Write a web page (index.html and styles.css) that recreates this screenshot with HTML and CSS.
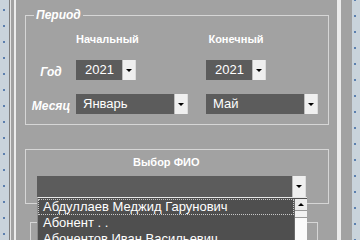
FILE: index.html
```html
<!DOCTYPE html>
<html lang="ru">
<head>
    <meta charset="UTF-8">
    <meta name="viewport" content="width=device-width, initial-scale=1.0">
    <title>Период и выбор ФИО</title>
    <link rel="stylesheet" href="styles.css">
</head>
<body>
    <div class="screen">
        <div class="strip strip-left"></div>
        <div class="window">
            <div class="frame">
                <div class="panel">
                    <fieldset class="group period">
                        <legend>Период</legend>
                        <div class="period-grid">
                            <span></span>
                            <div class="col-head">Начальный</div>
                            <div class="col-head">Конечный</div>

                            <div class="row-label">Год</div>
                            <div class="combo combo-year">
                                <span class="combo-text">2021</span>
                                <span class="combo-btn"></span>
                            </div>
                            <div class="combo combo-year">
                                <span class="combo-text">2021</span>
                                <span class="combo-btn"></span>
                            </div>

                            <div class="row-label">Месяц</div>
                            <div class="combo combo-month">
                                <span class="combo-text">Январь</span>
                                <span class="combo-btn"></span>
                            </div>
                            <div class="combo combo-month">
                                <span class="combo-text">Май</span>
                                <span class="combo-btn"></span>
                            </div>
                        </div>
                    </fieldset>

                    <fieldset class="group fio">
                        <div class="group-title">Выбор ФИО</div>
                        <div class="combo-wrap">
                            <div class="combo combo-wide">
                                <span class="combo-text"></span>
                                <span class="combo-btn"></span>
                            </div>
                            <div class="dropdown">
                                <ul class="dropdown-items">
                                    <li class="focused">Абдуллаев Меджид Гарунович</li>
                                    <li>Абонент . .</li>
                                    <li>Абонентов Иван Васильевич</li>
                                </ul>
                                <div class="scrollbar">
                                    <span class="scroll-up"></span>
                                    <span class="scroll-thumb"></span>
                                </div>
                            </div>
                        </div>
                    </fieldset>

                    <div class="group group-bottom"></div>
                </div>
            </div>
        </div>
        <div class="strip strip-right"></div>
    </div>
</body>
</html>
```

FILE: styles.css
```css
body {
    margin: 0;
    width: 360px;
    height: 240px;
    overflow: hidden;
    background: #a2a2a2;
    font-family: "Liberation Sans", Arial, sans-serif;
    color: #fff;
}

.screen {
    display: flex;
    height: 240px;
}

/* dotted blue edges of the neighbouring windows */
.strip {
    flex-shrink: 0;
    background-color: #c9d3db;
    background-image: linear-gradient(to bottom, transparent 0, transparent 5px, #5b7fae 5px, #5b7fae 7px, transparent 7px);
    background-size: 2px 16px;
    background-repeat: repeat-y;
}

.strip-left {
    width: 9px;
    background-position: 3px 4px;
}

.strip-right {
    width: 8px;
    background-position: 2px 10px;
}

.window {
    flex: 1;
    display: flex;
    border-left: 1px solid #7e7e7e;
    padding-right: 11px;
}

.frame {
    flex: 1;
    display: flex;
    border-left: 1px solid #e4e4e4;
    border-right: 4px solid #ececec;
    padding-left: 3px;
}

.panel {
    flex: 1;
    min-width: 0;
    border-left: 2px solid #ececec;
    padding: 8px 8px 0 9px;
}

.group {
    margin: 0;
    padding: 0;
    min-width: 0;
    border: 1px solid #d6d6d6;
}

.period legend {
    margin-left: 8px;
    padding: 0 2px;
    font-size: 12px;
    font-weight: bold;
    font-style: italic;
    line-height: 14px;
}

.period-grid {
    display: grid;
    grid-template-columns: 50px 130px 112px;
    row-gap: 14px;
    margin-top: 10px;
    padding-bottom: 10px;
}

.col-head {
    width: 60px;
    text-align: center;
    font-size: 11px;
    font-weight: bold;
    line-height: 14px;
}

.row-label {
    text-align: center;
    font-size: 12px;
    font-weight: bold;
    font-style: italic;
    line-height: 14px;
    padding-top: 5px;
}

.combo {
    display: flex;
    height: 20px;
    background: #5c5c5c;
    border-right: 1px solid #dcdcdc;
    box-sizing: border-box;
}

.combo-text {
    flex: 1;
    padding-left: 7px;
    font-size: 13px;
    line-height: 20px;
}

.combo-year {
    width: 60px;
}

.combo-year .combo-text {
    padding-left: 9px;
}

.combo-month {
    width: 112px;
}

.combo-btn {
    width: 12px;
    background: #efefef;
    border-left: 1px solid #bdbdbd;
    display: flex;
    align-items: center;
    justify-content: center;
}

.combo-btn::after {
    content: "";
    border-left: 3px solid transparent;
    border-right: 3px solid transparent;
    border-top: 3px solid #000;
}

.fio {
    margin-top: 24px;
    padding-bottom: 6px;
}

.group-title {
    padding: 5px 0 0 107px;
    font-size: 11px;
    font-weight: bold;
    line-height: 14px;
}

.combo-wrap {
    position: relative;
    margin: 7px 0 0 11px;
    width: 269px;
}

.combo-wide {
    width: 269px;
    height: 21px;
}

/* open list of the FIO combobox, drawn over the form */
.dropdown {
    position: absolute;
    top: 100%;
    left: 0;
    width: 270px;
    height: 60px;
    display: flex;
    background: #4f4f4f;
    border-top: 1px solid #e8e8e8;
    border-left: 1px solid #8a8a8a;
    box-sizing: border-box;
    padding-top: 1px;
    z-index: 2;
}

.dropdown-items {
    flex: 1;
    margin: 0;
    padding: 0;
    list-style: none;
}

.dropdown-items li {
    height: 16px;
    padding-left: 5px;
    font-size: 13px;
    line-height: 16px;
    white-space: nowrap;
    overflow: hidden;
    box-sizing: border-box;
}

.dropdown-items li.focused {
    outline: 1px dotted #c8c8c8;
    outline-offset: -1px;
}

.scrollbar {
    width: 12px;
    display: flex;
    flex-direction: column;
    background: #fafafa;
    border-left: 1px solid #6a6a6a;
}

.scroll-up {
    height: 11px;
    background: #ececec;
    border-bottom: 1px solid #9a9a9a;
    display: flex;
    align-items: center;
    justify-content: center;
}

.scroll-up::after {
    content: "";
    border-left: 3px solid transparent;
    border-right: 3px solid transparent;
    border-bottom: 3px solid #000;
}

.scroll-thumb {
    height: 6px;
    background: #f2f2f2;
    border-bottom: 1px solid #9a9a9a;
}

.group-bottom {
    margin: 18px 11px 0 5px;
    height: 30px;
    border-bottom: none;
}
```
